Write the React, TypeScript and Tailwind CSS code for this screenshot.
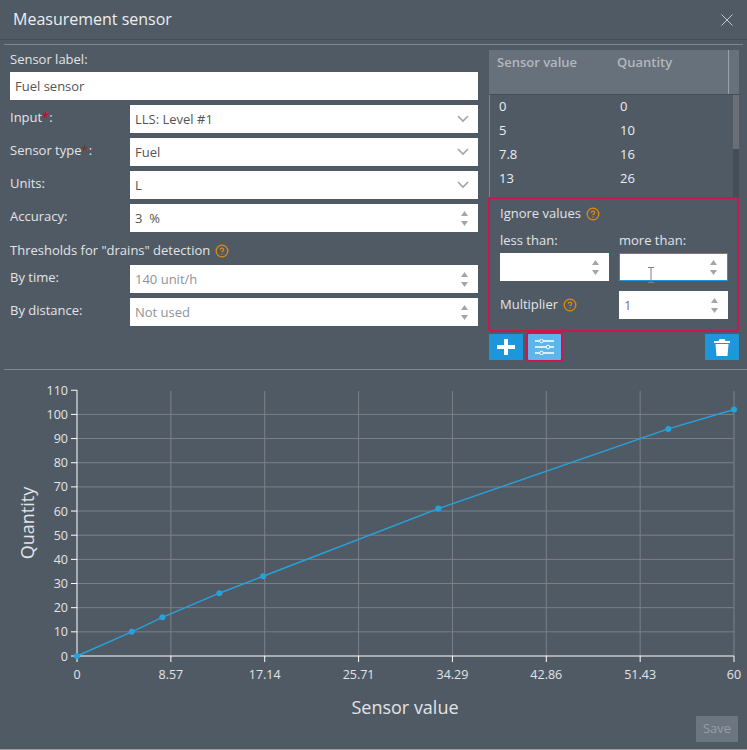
import type { ReactNode } from 'react';
import { CircleHelp } from 'lucide-react';

const POINTS: [number, number][] = [
  [0, 0],
  [5, 10],
  [7.8, 16],
  [13, 26],
  [17, 33],
  [33, 61],
  [54, 94],
  [60, 102],
];
const X_TICKS = ['0', '8.57', '17.14', '25.71', '34.29', '42.86', '51.43', '60'];
const Y_TICKS = [0, 10, 20, 30, 40, 50, 60, 70, 80, 90, 100, 110];
const ROWS = [
  ['0', '0'],
  ['5', '10'],
  ['7.8', '16'],
  ['13', '26'],
];

// svg starts at y=375 of the page
const px = (v: number) => 77 + v * 10.95;
const py = (v: number) => 281 - v * 2.416;

function Chevron() {
  return (
    <svg width="12" height="8" viewBox="0 0 12 8" className="shrink-0">
      <path d="M1 1l5 5 5-5" fill="none" stroke="#a0a3a7" strokeWidth="1.6" />
    </svg>
  );
}

function Spinner() {
  return (
    <div className="flex flex-col gap-[5px] shrink-0">
      <svg width="9" height="5" viewBox="0 0 9 5">
        <path d="M4.5 0L8 5H1z" fill="#a3a5a8" />
      </svg>
      <svg width="9" height="5" viewBox="0 0 9 5">
        <path d="M1 0h7L4.5 5z" fill="#a3a5a8" />
      </svg>
    </div>
  );
}

function Field({ children, icon, className = 'text-[#555]' }: { children?: ReactNode; icon?: ReactNode; className?: string }) {
  return (
    <div className={`h-7 bg-white flex items-center justify-between pl-[5px] pr-[9px] text-[13px] ${className}`}>
      <span className="mt-[1px]">{children}</span>
      {icon}
    </div>
  );
}

function Row({ label, required, children }: { label: string; required?: boolean; children: ReactNode }) {
  return (
    <div className="grid grid-cols-[120px_1fr] items-center mt-[5px]">
      <div className="text-[13px] text-[#e2e4e6] -mt-[2px]">
        {label}
        {required && <span className="text-[#d0021b]">*</span>}
        {required && ':'}
      </div>
      {children}
    </div>
  );
}

function Help() {
  return <CircleHelp size={14} strokeWidth={2.2} className="text-[#e08a0e] shrink-0" />;
}

function Chart() {
  const line = POINTS.map(([x, y]) => `${px(x)},${py(y)}`).join(' ');
  return (
    <svg width="747" height="345" viewBox="0 0 747 345" className="block">
      {Y_TICKS.slice(1, -1).map((v) => (
        <line key={v} x1={77} x2={734} y1={py(v)} y2={py(v)} stroke="#7b8088" />
      ))}
      {X_TICKS.slice(1).map((_, i) => (
        <line key={i} x1={77 + (i + 1) * 93.86} x2={77 + (i + 1) * 93.86} y1={16} y2={281} stroke="#7b8088" />
      ))}
      <path d="M77 15V281H734" fill="none" stroke="#fff" />
      {Y_TICKS.map((v) => (
        <g key={v}>
          <line x1={71} x2={77} y1={py(v)} y2={py(v)} stroke="#fff" />
          <text x={68} y={py(v) + 4.5} textAnchor="end" fontSize="12.5" fill="#e2e4e6">
            {v}
          </text>
        </g>
      ))}
      {X_TICKS.map((t, i) => (
        <g key={t}>
          <line x1={77 + i * 93.86} x2={77 + i * 93.86} y1={281} y2={287} stroke="#fff" />
          <text x={77 + i * 93.86} y={304} textAnchor="middle" fontSize="12.5" fill="#e2e4e6">
            {t}
          </text>
        </g>
      ))}
      <polyline points={line} fill="none" stroke="#27a1dc" strokeWidth="1.5" />
      {POINTS.map(([x, y]) => (
        <circle key={x} cx={px(x)} cy={py(y)} r="3" fill="#27a1dc" />
      ))}
      <text x={405} y={339} textAnchor="middle" fontSize="18" fill="#e2e4e6">
        Sensor value
      </text>
      <text transform="translate(34 148) rotate(-90)" textAnchor="middle" fontSize="18" fill="#e2e4e6">
        Quantity
      </text>
    </svg>
  );
}

export default function App() {
  return (
    <div className="w-[747px] h-[750px] overflow-hidden bg-[#505a64] font-['Open_Sans',sans-serif] text-[13px] text-[#e2e4e6] flex flex-col">
      <div className="h-10 shrink-0 flex items-center justify-between pl-[13px] pr-[14px] border-b border-[#454e57]">
        <h1 className="text-[16px] text-[#eceef0] font-normal -mt-[2px]">Measurement sensor</h1>
        <svg width="12" height="12" viewBox="0 0 12 12">
          <path d="M.5.5l11 11M11.5.5l-11 11" stroke="#c3c7cb" strokeWidth="1" fill="none" />
        </svg>
      </div>
      <div className="mx-1 mt-1 h-px bg-[#7d858d] shrink-0" />

      <div className="flex justify-between pl-[10px] pr-2 mt-[5px] h-[310px] shrink-0">
        <div className="w-[468px]">
          <div className="h-[22px] leading-[18px]">Sensor label:</div>
          <Field>Fuel sensor</Field>
          <Row label="Input" required>
            <Field icon={<Chevron />}>LLS: Level #1</Field>
          </Row>
          <Row label="Sensor type" required>
            <Field icon={<Chevron />}>Fuel</Field>
          </Row>
          <Row label="Units:">
            <Field icon={<Chevron />}>L</Field>
          </Row>
          <Row label="Accuracy:">
            <Field icon={<Spinner />}>3&nbsp;&nbsp;%</Field>
          </Row>
          <div className="flex items-center gap-[5px] h-[28px] pt-[9px]">
            Thresholds for "drains" detection <Help />
          </div>
          <Row label="By time:">
            <Field icon={<Spinner />} className="text-[#8f9296]">140 unit/h</Field>
          </Row>
          <Row label="By distance:">
            <Field icon={<Spinner />} className="text-[#8f9296]">Not used</Field>
          </Row>
        </div>

        <div className="w-[250px] flex flex-col">
          <div className="h-[45px] shrink-0 bg-[#66717c] flex font-semibold text-[#b4b8bd] border-b border-[#454e57]">
            <div className="w-[128px] pl-2 pt-[3px]">Sensor value</div>
            <div className="flex-1 pt-[3px]">Quantity</div>
            <div className="w-px bg-[#9aa1a8] mr-[10px]" />
          </div>
          <div className="h-[102px] shrink-0 flex border-l border-[#7d858d]">
            <div className="flex-1 text-[#eceef0]">
              {ROWS.map(([a, b]) => (
                <div key={a} className="h-6 flex items-center">
                  <div className="w-[130px] pl-[9px]">{a}</div>
                  <div>{b}</div>
                </div>
              ))}
            </div>
            <div className="w-[6px] h-full bg-[#454e58]">
              <div className="h-[54px] bg-[#6b6f75]" />
            </div>
          </div>
          <div className="h-[135px] shrink-0 border-2 border-[#c9184f] rounded-[3px] px-[10px] -ml-px">
            <div className="flex items-center gap-[5px] h-[30px]">
              Ignore values <Help />
            </div>
            <div className="grid grid-cols-[109px_109px] gap-x-[10px]">
              <div className="h-[24px] pt-[3px] leading-[16px]">less than:</div>
              <div className="h-[24px] pt-[3px] leading-[16px]">more than:</div>
              <Field icon={<Spinner />} />
              <div className="relative">
                <Field icon={<Spinner />} className="text-[#555] border border-[#1e96dc]" />
                <svg width="8" height="16" viewBox="0 0 8 16" className="absolute left-[28px] top-[14px]">
                  <path d="M1 .5h6M1 15.5h6M4 .5v15" stroke="#7d8288" fill="none" />
                </svg>
              </div>
            </div>
            <div className="grid grid-cols-[109px_109px] gap-x-[10px] mt-[10px]">
              <div className="flex items-center gap-[5px]">
                Multiplier <Help />
              </div>
              <Field icon={<Spinner />} className="text-[#777]">1</Field>
            </div>
          </div>
          <div className="flex items-start mt-[2px]">
            <button className="w-[34px] h-[26px] bg-[#1e96dc] flex items-center justify-center">
              <svg width="18" height="16" viewBox="0 0 18 16">
                <path d="M7 0h4v6h7v4h-7v6H7v-6H0V6h7z" fill="#fff" />
              </svg>
            </button>
            <button className="w-[37px] h-[30px] -mt-[2px] ml-[3px] bg-[#5cb6ec] border-2 border-[#c9184f] rounded-[3px] flex items-center justify-center">
              <svg width="19" height="16" viewBox="0 0 19 16" fill="none">
                <path d="M0 2h19M0 8h19M0 14h19" stroke="#fff" strokeWidth="1.6" />
                <circle cx="6.5" cy="2" r="1.8" fill="#5cb6ec" stroke="#fff" />
                <circle cx="13" cy="8" r="1.8" fill="#5cb6ec" stroke="#fff" />
                <circle cx="6.5" cy="14" r="1.8" fill="#5cb6ec" stroke="#fff" />
              </svg>
            </button>
            <button className="ml-auto w-[34px] h-[26px] bg-[#1e96dc] flex items-center justify-center">
              <svg width="16" height="17" viewBox="0 0 16 17">
                <path d="M5.5 0h5l1 2H16v2H0V2h4.5zM1.5 5h13l-1 12h-11z" fill="#fff" />
              </svg>
            </button>
          </div>
        </div>
      </div>

      <div className="ml-1 mt-[9px] h-px bg-[#7d858d] shrink-0" />
      <div className="mt-[5px] shrink-0">
        <Chart />
      </div>
      <div className="flex justify-end pr-[9px] -mt-[4px]">
        <button className="w-[42px] h-[26px] bg-[#6c7680] text-[#969ca3] text-[13px]">Save</button>
      </div>
      <div className="mt-auto h-px bg-[#9a9da0] shrink-0" />
    </div>
  );
}
